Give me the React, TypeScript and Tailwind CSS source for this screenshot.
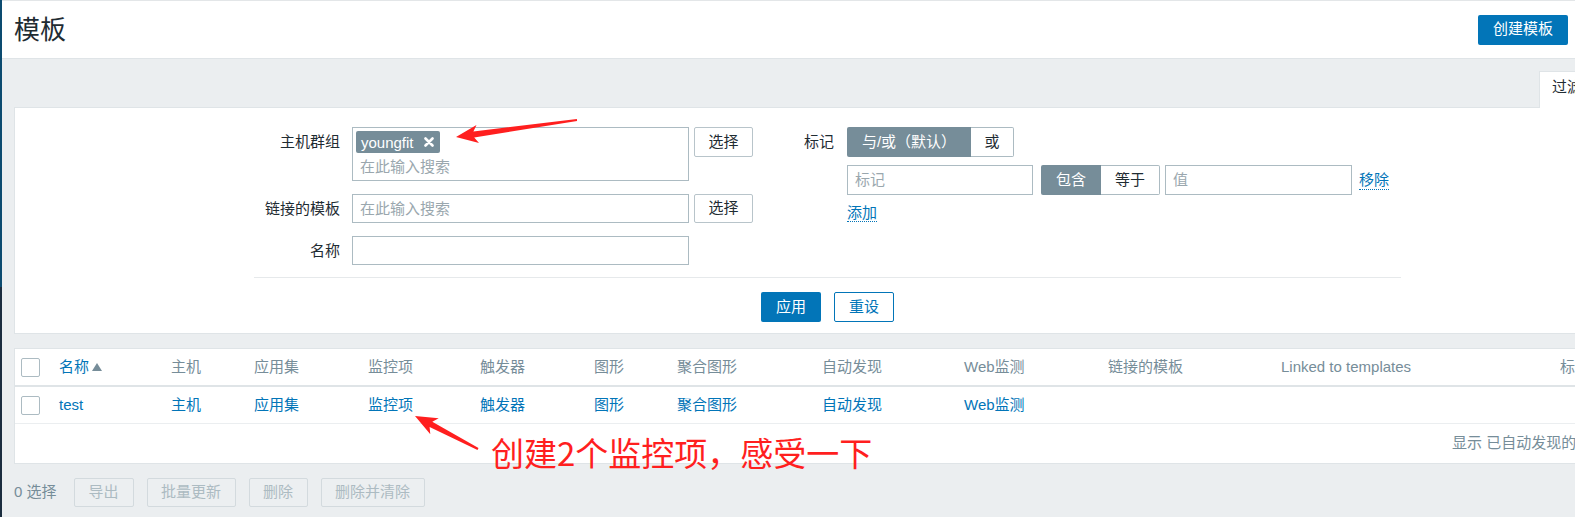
const arrowPoints = (x1: number, y1: number, x2: number, y2: number, L: number, W: number, w0: number, w1: number) => {
  const len = Math.hypot(x2 - x1, y2 - y1);
  const ux = (x2 - x1) / len;
  const uy = (y2 - y1) / len;
  const nx = -uy;
  const ny = ux;
  const neckX = x2 - ux * L;
  const neckY = y2 - uy * L;
  const wingX = x2 - ux * (L + 4);
  const wingY = y2 - uy * (L + 4);
  const pts = [
    [x1 + (nx * w0) / 2, y1 + (ny * w0) / 2],
    [neckX + (nx * w1) / 2, neckY + (ny * w1) / 2],
    [wingX + (nx * W) / 2, wingY + (ny * W) / 2],
    [x2, y2],
    [wingX - (nx * W) / 2, wingY - (ny * W) / 2],
    [neckX - (nx * w1) / 2, neckY - (ny * w1) / 2],
    [x1 - (nx * w0) / 2, y1 - (ny * w0) / 2],
  ];
  return pts.map((p) => p[0].toFixed(1) + "," + p[1].toFixed(1)).join(" ");
};

const headers = ["主机", "应用集", "监控项", "触发器", "图形", "聚合图形", "自动发现", "Web监测", "链接的模板", "Linked to templates", "标记"];
const links = ["主机", "应用集", "监控项", "触发器", "图形", "聚合图形", "自动发现", "Web监测"];

const Checkbox = () => <div className="w-[19px] h-[19px] rounded-[2px] border border-[#acbbc2] bg-white" />;

export default function App() {
  return (
    <div className="relative w-[1575px] h-[517px] overflow-hidden bg-[#ebeef0] flex font-['Liberation_Sans','Noto_Sans_CJK_SC',sans-serif] text-[15px] text-[#1f2c33]">
      <div className="w-[2px] shrink-0 flex flex-col">
        <div className="h-[287px] bg-[#0c4b70]" />
        <div className="flex-1 bg-[#1b2d3f]" />
      </div>

      <div className="flex-1 min-w-0 flex flex-col">
        {/* header */}
        <header className="h-[59px] shrink-0 bg-white border-t border-b border-t-[#e3e6e8] border-b-[#dfe4e7] flex items-center justify-between pl-[12px] pr-[7px]">
          <h1 className="text-[26px] leading-none font-normal">模板</h1>
          <button className="h-[30px] w-[90px] rounded-[2px] bg-[#0275b8] text-white">创建模板</button>
        </header>

        {/* filter tab */}
        <div className="self-end mt-[12px] mb-[-1px] relative z-10 w-[36px] h-[37px] bg-white border-l border-t border-[#dfe4e7] overflow-hidden whitespace-nowrap pl-[12px] pt-[5px] leading-[20px]">
          过滤器
        </div>

        {/* filter panel */}
        <div className="ml-[12px] bg-white border border-r-0 border-[#dfe4e7] pt-[19px] pb-[11px]">
          <div className="ml-[239px] w-[1147px]">
            <div className="flex items-start">
              {/* left column */}
              <div className="flex flex-col gap-[13px]">
                <div className="flex items-start">
                  <div className="w-[98px] pr-[12px] text-right leading-[30px] whitespace-nowrap">主机群组</div>
                  <div className="w-[337px] h-[54px] border border-[#acbbc2] p-[3px]">
                    <div className="inline-flex items-center h-[22px] rounded-[2px] bg-[#768d99] text-white pl-[5px] pr-[6px] gap-[10px] leading-none">
                      <span>youngfit</span>
                      <svg width="10" height="10" viewBox="0 0 10 10">
                        <path d="M1.5 1.5 L8.5 8.5 M8.5 1.5 L1.5 8.5" stroke="white" strokeWidth="2.6" strokeLinecap="round" />
                      </svg>
                    </div>
                    <div className="pl-[4px] mt-[3px] leading-[20px] text-[#9aa7ae]">在此输入搜索</div>
                  </div>
                  <button className="ml-[5px] w-[59px] h-[30px] rounded-[2px] border border-[#b8c4ca] bg-white">选择</button>
                </div>
                <div className="flex items-center">
                  <div className="w-[98px] pr-[12px] text-right leading-[29px] whitespace-nowrap">链接的模板</div>
                  <div className="w-[337px] h-[29px] border border-[#acbbc2] px-[7px] leading-[27px] text-[#9aa7ae]">在此输入搜索</div>
                  <button className="ml-[5px] w-[59px] h-[29px] rounded-[2px] border border-[#b8c4ca] bg-white">选择</button>
                </div>
                <div className="flex items-center">
                  <div className="w-[98px] pr-[12px] text-right leading-[29px] whitespace-nowrap">名称</div>
                  <div className="w-[337px] h-[29px] border border-[#acbbc2]" />
                </div>
              </div>

              {/* right column */}
              <div className="flex items-start">
                <div className="w-[94px] pr-[13px] text-right leading-[30px]">标记</div>
                <div className="flex flex-col">
                  <div className="flex h-[30px]">
                    <div className="w-[124px] rounded-l-[2px] bg-[#768d99] text-white flex items-center justify-center">与/或（默认）</div>
                    <div className="w-[43px] rounded-r-[2px] border border-l-0 border-[#acbbc2] flex items-center justify-center">或</div>
                  </div>
                  <div className="flex items-center mt-[8px]">
                    <div className="w-[186px] h-[30px] border border-[#acbbc2] px-[7px] leading-[28px] text-[#9aa7ae]">标记</div>
                    <div className="flex h-[30px] ml-[8px]">
                      <div className="w-[60px] rounded-l-[2px] bg-[#768d99] text-white flex items-center justify-center">包含</div>
                      <div className="w-[59px] rounded-r-[2px] border border-l-0 border-[#acbbc2] flex items-center justify-center">等于</div>
                    </div>
                    <div className="ml-[5px] w-[187px] h-[30px] border border-[#acbbc2] px-[7px] leading-[28px] text-[#9aa7ae]">值</div>
                    <span className="ml-[7px] text-[#0275b8] leading-[19px] border-b border-dotted border-[#0275b8]">移除</span>
                  </div>
                  <div className="mt-[7px]">
                    <span className="text-[#0275b8] leading-[19px] border-b border-dotted border-[#0275b8]">添加</span>
                  </div>
                </div>
              </div>
            </div>

            <div className="mt-[12px] border-t border-[#e6e9eb]" />
            <div className="mt-[14px] flex justify-center gap-[13px]">
              <button className="w-[60px] h-[30px] rounded-[2px] bg-[#0275b8] text-white">应用</button>
              <button className="w-[60px] h-[30px] rounded-[2px] border border-[#0275b8] bg-white text-[#0275b8]">重设</button>
            </div>
          </div>
        </div>

        {/* table */}
        <div className="mt-[14px] ml-[12px] bg-white border border-r-0 border-[#dfe4e7]">
          <div className="grid grid-cols-[44px_112px_83px_114px_112px_114px_83px_145px_142px_144px_173px_279px_1fr] h-[38px] items-center border-b-2 border-[#dfe4e7] whitespace-nowrap">
            <div className="pl-[6px]"><Checkbox /></div>
            <div className="flex items-center text-[#0275b8]">
              名称
              <span className="ml-[3px] w-0 h-0 border-x-[5px] border-x-transparent border-b-[8px] border-b-[#768d99]" />
            </div>
            {headers.map((h) => (
              <div key={h} className="text-[#768d99]">{h}</div>
            ))}
          </div>
          <div className="grid grid-cols-[44px_112px_83px_114px_112px_114px_83px_145px_142px_144px_173px_279px_1fr] h-[37px] items-center border-b border-[#ebeef0] whitespace-nowrap">
            <div className="pl-[6px]"><Checkbox /></div>
            <div className="text-[#0275b8]">test</div>
            {links.map((h) => (
              <div key={h} className="text-[#0275b8]">{h}</div>
            ))}
          </div>
          <div className="h-[39px] flex items-center pl-[1437px] whitespace-nowrap text-[#768d99]">显示 已自动发现的 1中的1</div>
        </div>

        {/* bottom actions */}
        <div className="pt-[14px] pl-[12px] flex items-center gap-[13px] whitespace-nowrap">
          <span className="text-[#768d99] mr-[4px]">0 选择</span>
          {[["导出", "w-[60px]"], ["批量更新", "w-[89px]"], ["删除", "w-[59px]"], ["删除并清除", "w-[104px]"]].map(([t, w]) => (
            <button key={t} className={`${w} h-[29px] rounded-[2px] border border-[#d3dade] bg-[#eceff1] text-[#acbbc2]`}>{t}</button>
          ))}
        </div>
      </div>

      {/* annotations */}
      <svg className="absolute inset-0 pointer-events-none" width="1575" height="517">
        <polygon points={arrowPoints(577, 120, 456, 137, 18, 18, 2, 6)} fill="#ff1f1f" />
        <polygon points={arrowPoints(478, 449, 415, 416, 18, 18, 2, 6)} fill="#ff1f1f" />
      </svg>
      <div className="absolute left-[491px] top-[436px] text-[33px] leading-none text-[#ff1f1f] whitespace-nowrap font-['Noto_Sans_CJK_SC',sans-serif]">
        创建2个监控项，感受一下
      </div>
    </div>
  );
}
